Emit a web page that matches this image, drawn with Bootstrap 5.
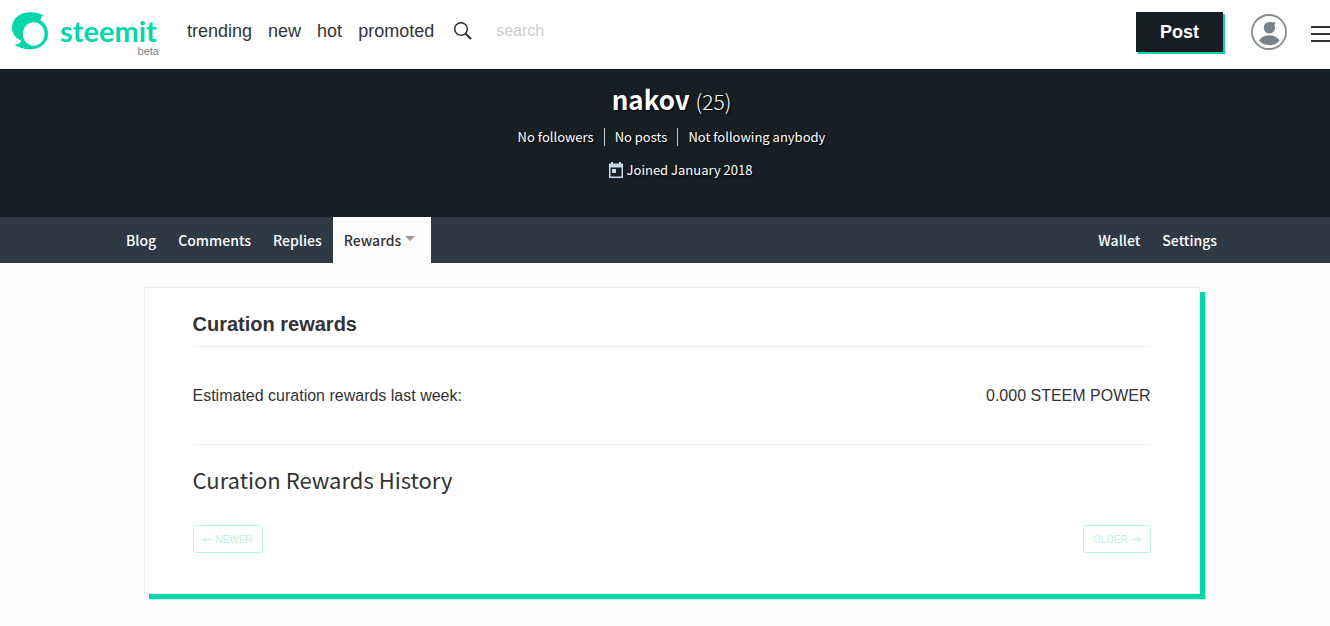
<!DOCTYPE html>
<html lang="en">
<head>
<meta charset="utf-8">
<meta name="viewport" content="width=device-width, initial-scale=1">
<title>nakov - Curation rewards</title>
<link href="https://cdn.jsdelivr.net/npm/bootstrap@5.3.0/dist/css/bootstrap.min.css" rel="stylesheet">
<style>
  :root { --teal: #06d6a9; --ink: #171f24; --source: "Noto Sans CJK SC", "Open Sans", sans-serif; }
  body { background: #fcfcfc; color: #333; font-family: "Liberation Sans", Arial, sans-serif; overflow-x: hidden; }
  a { color: inherit; text-decoration: none; }
  .site-header { background: #fff; height: 69px; border-bottom: 1px solid #eee; }
  .logo { width: 151px; height: 46px; }
  .logo-mark { width: 36px; height: 38px; }
  .logo-word { font: 700 29px/28px Lato, sans-serif; color: var(--teal); }
  .logo-beta { font-size: 11px; line-height: 12px; color: #788187; right: 0; bottom: -3px; }
  .top-links { font-size: 18px; line-height: 24px; gap: 16px; }
  .search-box { border: 0; width: 180px; font-size: 16px; line-height: 24px; padding: 0; background: none; }
  .search-box::placeholder { color: #ccc; opacity: 1; }
  .post-btn { background: var(--ink); color: #fff; border: 0; width: 87px; height: 40px; font-size: 18px; font-weight: 700; box-shadow: 2px 2px 0 0 var(--teal); }
  .plain-btn { border: 0; background: none; padding: 0; line-height: 0; }
  .banner { background: var(--ink); color: #fff; height: 148px; padding: 12px 0 0 13px; font-family: var(--source); text-shadow: 1px 1px 2px #000; }
  .banner h1 { font-size: 26px; line-height: 36px; font-weight: 700; margin: 0; }
  .banner h1 span { font-size: 21px; font-weight: 300; }
  .facts { font-size: 13px; line-height: 18px; margin-top: 9px; }
  .facts a { padding: 0 10px; }
  .facts a + a { border-left: 1px solid #ccc; }
  .joined { font-size: 13px; line-height: 18px; margin-top: 15px; padding-left: 18px; gap: 4px; }
  .tab-strip { background: #2d3a45; padding-left: 13px; }
  .tab-row { max-width: 1113px; font: 500 14px/46px var(--source); color: #fcfcfc; }
  .tab-row a { padding: 0 11px; }
  .tab-row .current { background: #fcfcfc; color: #333; padding-right: 16px; }
  .caret-down { display: inline-block; border: 5px solid transparent; border-top-color: #999; border-bottom: 0; vertical-align: 5px; margin-left: 4px; }
  .page-area { padding: 24px 0 26px 13px; }
  .panel { max-width: 1056px; background: #fff; border: 1px solid #eee; padding: 21px 48px 40px; box-shadow: 5px 5px 0 0 var(--teal), 6px 6px 0 0 #b4f3e5; }
  .panel h2 { font-size: 20px; line-height: 30px; font-weight: 700; margin: 0; padding-bottom: 7px; border-bottom: 1px solid #eee; }
  .estimate { font-size: 16px; line-height: 24px; padding: 37px 0 36px; border-bottom: 1px solid #eee; }
  .panel h3 { font: 400 22px/32px var(--source); margin: 18px 0 30px; }
  .pager-btn { height: 28px; padding: 2px 9px 0; font-size: 10px; line-height: 24px; background: #fff; border: 1px solid var(--teal); border-radius: 3px; color: var(--teal); }
  .pager-btn:disabled { color: #bdf2e4; border-color: #b4f3e5; }
  .arrow { font-family: "DejaVu Sans", sans-serif; font-size: 12px; line-height: 12px; }
</style>
</head>
<body>
<header class="site-header d-flex align-items-start justify-content-between">
  <div class="d-flex align-items-center pt-2">
    <a href="#" class="logo position-relative d-flex align-items-center ms-2 ps-1">
      <svg class="logo-mark" viewBox="0 0 36 38" fill="#06d6a9" aria-hidden="true"><path d="M31.500 3.500C26 0 20 0 15 0.500C6 1.500 0 8 0 15.500C0 21 3 26 8.700 28.200C9.500 30.500 6.500 32.300 2.500 32.800C7 36 13 37.500 19 37.200C29 37 36 30.500 36 22C36 16 33.500 11 28.500 8.200C28.600 6 29.500 4.500 31.500 3.500Z"/><ellipse fill="#fff" cx="21.700" cy="22" rx="10.800" ry="11.700"/></svg>
      <span class="logo-word ms-2 ps-1">steemit</span>
      <span class="logo-beta position-absolute">beta</span>
    </a>
    <nav class="top-links d-flex ms-4 ps-1">
      <a href="#">trending</a><a href="#">new</a><a href="#">hot</a><a href="#">promoted</a>
    </nav>
    <form class="d-flex align-items-center ms-3" role="search">
      <button type="button" class="plain-btn ps-1" aria-label="Search"><svg width="18" height="18" viewBox="0 0 18 18" fill="none" stroke="#333"><circle cx="7" cy="7" r="6.300" stroke-width="1.500"/><path d="M11.500 11.500L17 17" stroke-width="2.200"/></svg></button>
      <input class="search-box ms-4" type="search" placeholder="search" aria-label="search">
    </form>
  </div>
  <div class="d-flex align-items-center pt-2 mt-1">
    <button type="button" class="post-btn">Post</button>
    <button type="button" class="plain-btn ms-4 ps-1" aria-label="Account"><svg width="36" height="36" viewBox="0 0 36 36"><circle cx="18" cy="18" r="17" fill="#fff" stroke="#858d92" stroke-width="1.800"/><path fill="#788187" d="M23.500 10.500C23.900 11.500 24 12.500 24 14A5.600 5.600 0 0 1 12.800 14C12.800 10 15.500 8 19 8C21 8 22.500 8.600 24.300 8.200C24.500 9.200 24.200 10 23.500 10.500ZM8 26.600C12 19.500 24.500 19.500 28.500 26.600C24.500 32.800 12.500 32.800 8 26.600Z"/></svg></button>
    <button type="button" class="plain-btn ms-4" aria-label="Menu"><svg width="19" height="20" viewBox="0 0 19 20" stroke="#333" stroke-width="2"><path d="M0 5H19M0 12H19M0 19H19"/></svg></button>
  </div>
</header>

<section class="banner d-flex flex-column align-items-center">
  <h1>nakov <span>(25)</span></h1>
  <div class="facts d-flex"><a href="#">No followers</a><a href="#">No posts</a><a href="#">Not following anybody</a></div>
  <div class="joined d-flex align-items-center">
    <svg width="14" height="16" viewBox="0 0 14 16" fill="#c5d9ea" aria-hidden="true"><path fill-rule="evenodd" d="M2 0H4V1.500H10V0H12V1.500H14V16H0V1.500H2ZM1.500 5.500V14.500H12.500V5.500ZM3 7H7V11H3Z"/></svg>
    <span>Joined January 2018</span>
  </div>
</section>

<div class="tab-strip">
  <nav class="tab-row d-flex justify-content-between mx-auto">
    <div class="d-flex"><a href="#">Blog</a><a href="#">Comments</a><a href="#">Replies</a><a href="#" class="current">Rewards<span class="caret-down"></span></a></div>
    <div class="d-flex"><a href="#">Wallet</a><a href="#">Settings</a></div>
  </nav>
</div>

<main class="page-area">
  <section class="panel mx-auto">
    <h2>Curation rewards</h2>
    <div class="estimate d-flex justify-content-between"><span>Estimated curation rewards last week:</span><span>0.000 STEEM POWER</span></div>
    <h3>Curation Rewards History</h3>
    <div class="d-flex justify-content-between">
      <button type="button" class="pager-btn" disabled><span class="arrow">←</span> NEWER</button>
      <button type="button" class="pager-btn" disabled>OLDER <span class="arrow">→</span></button>
    </div>
  </section>
</main>
<script src="https://cdn.jsdelivr.net/npm/bootstrap@5.3.0/dist/js/bootstrap.bundle.min.js"></script>
</body>
</html>
